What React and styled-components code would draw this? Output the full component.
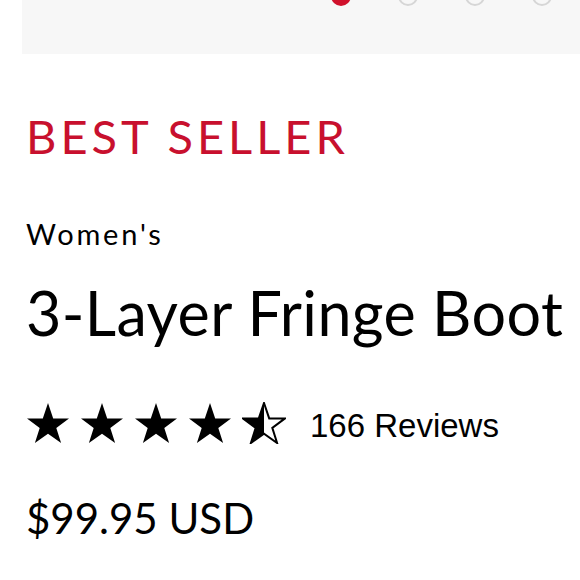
import React from 'react';
import styled, { createGlobalStyle } from 'styled-components';

const Global = createGlobalStyle`
  body {
    margin: 0;
    background: #fff;
    font-family: Lato, "Noto Sans", sans-serif;
    color: #000;
  }
`;

const Page = styled.div`
  width: 580px;
  height: 580px;
  overflow: hidden;
`;

const Gallery = styled.div`
  margin-left: 22px;
  height: 54px;
  background: #f7f7f7;
  display: flex;
  padding-left: 309px;
  gap: 47px;
`;

const Dot = styled.span`
  width: 20px;
  height: 20px;
  margin-top: -14px;
  border-radius: 50%;
  box-sizing: border-box;
  background: ${p => (p.active ? '#d0112b' : 'transparent')};
  border: ${p => (p.active ? 'none' : '2px solid #d6d6d6')};
`;

const Info = styled.div`
  padding-left: 26px;
`;

const Badge = styled.div`
  margin-top: 59px;
  font-size: 47px;
  line-height: 47px;
  color: #c8102e;
  letter-spacing: 4px;
`;

const Gender = styled.div`
  margin-top: 60px;
  font-size: 29px;
  line-height: 28px;
  letter-spacing: 2.8px;
`;

const Title = styled.h1`
  margin: 34px 0 0;
  font-size: 61px;
  line-height: 61px;
  font-weight: 400;
  letter-spacing: 0.4px;
`;

const Rating = styled.div`
  margin-top: 60px;
  height: 40px;
  display: flex;
  align-items: center;
`;

const Stars = styled.div`
  display: flex;
  gap: 10px;
`;

const Reviews = styled.span`
  margin: 5px 0 0 24px;
  font-family: "Liberation Sans", Arial, sans-serif;
  font-size: 33px;
`;

const Price = styled.div`
  margin-top: 53px;
  font-size: 42px;
  line-height: 44px;
`;

const STAR = 'M22 1 L27.2 16.4 L43 16.4 L30.3 25.9 L35.1 41 L22 31.7 L8.9 41 L13.7 25.9 L1 16.4 L16.8 16.4 Z';

function Star({ half }) {
  return (
    <svg width="44" height="42" viewBox="0 0 44 42">
      {half ? (
        <>
          <defs>
            <clipPath id="left-half">
              <rect x="0" y="0" width="22" height="42" />
            </clipPath>
          </defs>
          <path d={STAR} fill="#fff" stroke="#000" strokeWidth="2" strokeLinejoin="miter" />
          <path d={STAR} fill="#000" clipPath="url(#left-half)" />
        </>
      ) : (
        <path d={STAR} fill="#000" />
      )}
    </svg>
  );
}

export default function App() {
  return (
    <Page>
      <Global />
      <Gallery>
        <Dot active />
        <Dot />
        <Dot />
        <Dot />
      </Gallery>
      <Info>
        <Badge>BEST SELLER</Badge>
        <Gender>Women's</Gender>
        <Title>3-Layer Fringe Boot</Title>
        <Rating>
          <Stars>
            <Star />
            <Star />
            <Star />
            <Star />
            <Star half />
          </Stars>
          <Reviews>166 Reviews</Reviews>
        </Rating>
        <Price>$99.95 USD</Price>
      </Info>
    </Page>
  );
}
